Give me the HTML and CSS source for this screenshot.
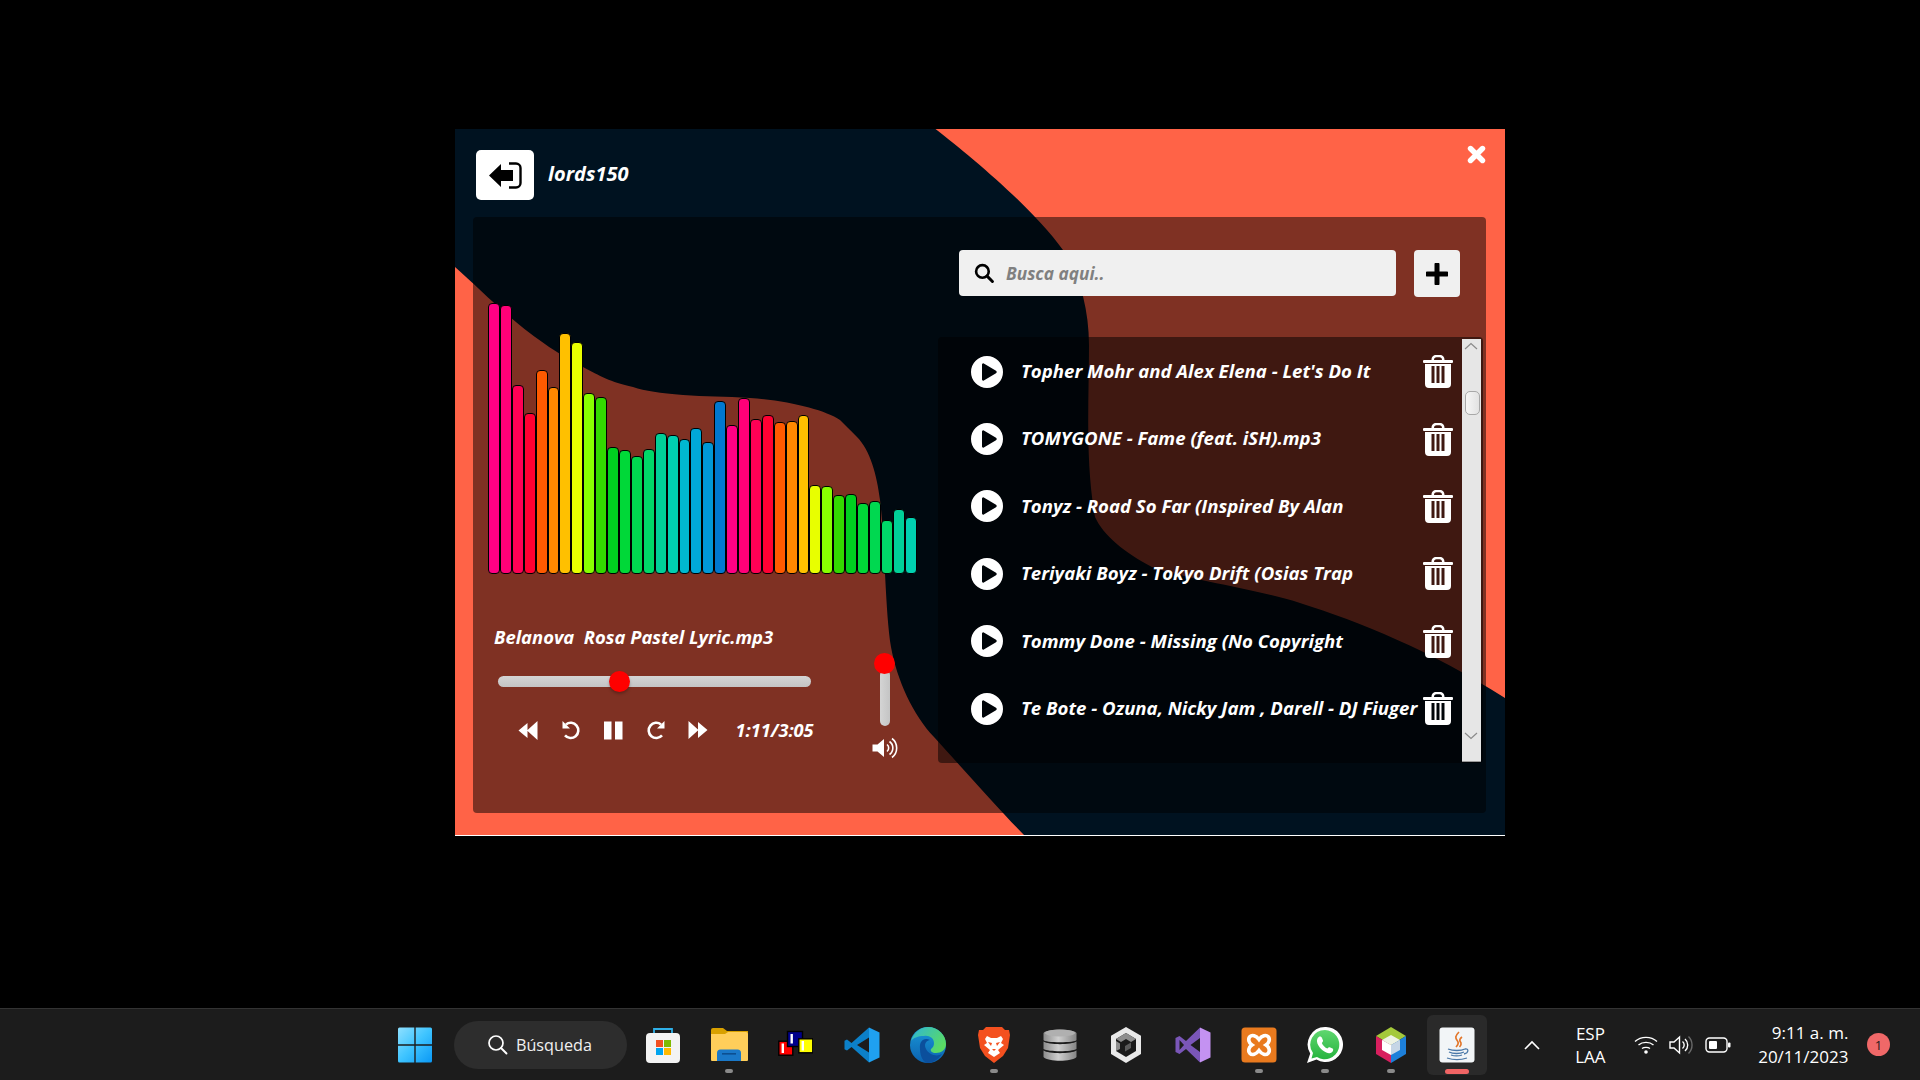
FILE: index.html
```html
<!DOCTYPE html>
<html lang="es">
<head>
<meta charset="utf-8">
<title>Reproductor</title>
<link rel="stylesheet" href="styles.css">
</head>
<body>
<div class="desktop">
  <main class="stage">
    <section class="window">
      <svg class="blob" viewBox="0 0 1050 707" aria-hidden="true">
        <path transform="translate(-455 -129)" fill="#001220" d="M455 129 L935.5 129 C970 156 1030 205 1063 250 C1080 275 1089 310 1089 345 C1089 400 1085 460 1095 517 C1103 535 1125 553 1152 567 C1190 580 1260 590 1300 603 C1360 622 1430 650 1505 698 L1505 836 L1025 836 C1002 813 964 770 934 737 C913 715 897 680 891 647 C885 610 885 540 880 500 C877 475 870 450 857 437 C850 430 845 425 840 420 C825 410 790 401 750 398 C725 396 705 397 683 395 C660 393 645 391 633 387 C610 382 600 376 583 367 C565 358 535 339 510 317 C490 300 470 280 455 267 Z"/>
      </svg>
      <header class="topbar">
        <button class="back-btn" type="button" aria-label="Salir">
          <svg width="33" height="27" viewBox="0 0 33 27"><path d="M0 13.5 L12 2 V8 H24 V19 H12 V25Z" fill="#000"/><path d="M20 1.5 H27 a4.5 4.5 0 0 1 4.5 4.5 V21 a4.5 4.5 0 0 1 -4.5 4.5 H20" fill="none" stroke="#000" stroke-width="2.4"/></svg>
        </button>
        <span class="username">lords150</span>
        <svg class="close" width="19" height="19" viewBox="0 0 19 19"><path d="M3.5 3.5 L15.5 15.5 M15.5 3.5 L3.5 15.5" stroke="#fff" stroke-width="5.4" stroke-linecap="round"/></svg>
      </header>
      <div class="panel">
        <div class="left">
          <div class="bars">
            <i class="bar b1" style="height:271px"></i><i class="bar b2" style="height:269px"></i><i class="bar b3" style="height:189px"></i><i class="bar b4" style="height:161px"></i><i class="bar b5" style="height:204px"></i><i class="bar b6" style="height:187px"></i><i class="bar b7" style="height:241px"></i><i class="bar b8" style="height:232px"></i><i class="bar b9" style="height:181px"></i><i class="bar b10" style="height:177px"></i><i class="bar b11" style="height:127px"></i><i class="bar b12" style="height:124px"></i><i class="bar b13" style="height:118px"></i><i class="bar b14" style="height:125px"></i><i class="bar b15" style="height:141px"></i><i class="bar b16" style="height:139px"></i><i class="bar b17" style="height:135px"></i><i class="bar b18" style="height:146px"></i><i class="bar b19" style="height:132px"></i><i class="bar b20" style="height:173px"></i><i class="bar b1" style="height:149px"></i><i class="bar b2" style="height:176px"></i><i class="bar b3" style="height:155px"></i><i class="bar b4" style="height:159px"></i><i class="bar b5" style="height:152px"></i><i class="bar b6" style="height:153px"></i><i class="bar b7" style="height:159px"></i><i class="bar b8" style="height:89px"></i><i class="bar b9" style="height:88px"></i><i class="bar b10" style="height:79px"></i><i class="bar b11" style="height:80px"></i><i class="bar b12" style="height:71px"></i><i class="bar b13" style="height:73px"></i><i class="bar b14" style="height:54px"></i><i class="bar b15" style="height:65px"></i><i class="bar b16" style="height:57px"></i>
          </div>
          <div class="player">
            <div class="player-main">
              <div class="now">Belanova  Rosa Pastel Lyric.mp3</div>
              <div class="seek"><span class="thumb seek-thumb"></span></div>
              <div class="controls">
                <span class="ctl"><svg width="20" height="20" viewBox="0 0 20 20"><path d="M0.5 10.5 L9.5 3 V18Z M9 10.5 L19.5 1 V20Z" fill="#fff"/></svg></span>
                <span class="ctl ctl-up"><svg width="20" height="20" viewBox="0 0 20 20"><path d="M5 4.4 A7.6 7.6 0 1 1 4 15.4" fill="none" stroke="#fff" stroke-width="2.6"/><path d="M1.5 1 V8.5 H9Z" fill="#fff"/></svg></span>
                <span class="ctl"><svg width="19" height="19" viewBox="0 0 19 19"><path d="M0 0.5 H7.5 V18.5 H0Z M11 0.5 H18.5 V18.5 H11Z" fill="#fff"/></svg></span>
                <span class="ctl"><svg width="20" height="20" viewBox="0 0 20 20"><path d="M15 4.4 A7.6 7.6 0 1 0 16 15.4" fill="none" stroke="#fff" stroke-width="2.6"/><path d="M18.5 1 V8.5 H11Z" fill="#fff"/></svg></span>
                <span class="ctl"><svg width="20" height="20" viewBox="0 0 20 20"><path d="M0.5 1 L10.5 10 L0.5 19Z M10 2 L19.5 10 L10 18Z" fill="#fff"/></svg></span>
                <span class="time">1:11/3:05</span>
              </div>
            </div>
            <div class="volume">
              <span class="thumb vol-thumb"></span>
              <span class="vol-track"></span>
              <svg class="vol-icon" width="26" height="22" viewBox="0 0 26 22"><path d="M0.5 7.5 H5.5 L12 2 V20 L5.5 14.5 H0.5Z" fill="#fff"/><path d="M15 7.5 a4.5 4.5 0 0 1 0 7 M17.5 4.5 a8 8 0 0 1 0 13 M20 1.5 a12 12 0 0 1 0 19" fill="none" stroke="#fff" stroke-width="1.6"/></svg>
            </div>
          </div>
        </div>
        <div class="right">
          <div class="search-row">
            <label class="search">
              <svg width="20" height="20" viewBox="0 0 19 19"><circle cx="8" cy="8" r="6" fill="none" stroke="#000" stroke-width="2.5"/><path d="M12.5 12.5 L17.5 17.5" stroke="#000" stroke-width="2.8" stroke-linecap="round"/></svg>
              <span class="placeholder">Busca aqui..</span>
            </label>
            <button class="add-btn" type="button" aria-label="Agregar">
              <svg width="22" height="22" viewBox="0 0 22 22"><path d="M11 1.5 V20.5 M1.5 11 H20.5" stroke="#000" stroke-width="5" stroke-linecap="round"/></svg>
            </button>
          </div>
          <div class="list">
            <ul class="rows">
              <li class="row"><svg class="play" width="32" height="32" viewBox="0 0 32 32"><use href="#play-icon"/></svg><span class="song">Topher Mohr and Alex Elena - Let's Do It</span><svg class="trash" width="30" height="33" viewBox="0 0 30 33"><use href="#trash-icon"/></svg></li>
              <li class="row"><svg class="play" width="32" height="32" viewBox="0 0 32 32"><use href="#play-icon"/></svg><span class="song">TOMYGONE - Fame (feat. iSH).mp3</span><svg class="trash" width="30" height="33" viewBox="0 0 30 33"><use href="#trash-icon"/></svg></li>
              <li class="row"><svg class="play" width="32" height="32" viewBox="0 0 32 32"><use href="#play-icon"/></svg><span class="song">Tonyz - Road So Far (Inspired By Alan</span><svg class="trash" width="30" height="33" viewBox="0 0 30 33"><use href="#trash-icon"/></svg></li>
              <li class="row"><svg class="play" width="32" height="32" viewBox="0 0 32 32"><use href="#play-icon"/></svg><span class="song">Teriyaki Boyz - Tokyo Drift (Osias Trap</span><svg class="trash" width="30" height="33" viewBox="0 0 30 33"><use href="#trash-icon"/></svg></li>
              <li class="row"><svg class="play" width="32" height="32" viewBox="0 0 32 32"><use href="#play-icon"/></svg><span class="song">Tommy Done - Missing (No Copyright</span><svg class="trash" width="30" height="33" viewBox="0 0 30 33"><use href="#trash-icon"/></svg></li>
              <li class="row"><svg class="play" width="32" height="32" viewBox="0 0 32 32"><use href="#play-icon"/></svg><span class="song">Te Bote - Ozuna, Nicky Jam , Darell - DJ Fiuger</span><svg class="trash" width="30" height="33" viewBox="0 0 30 33"><use href="#trash-icon"/></svg></li>
            </ul>
            <div class="scrollbar">
              <svg width="14" height="8" viewBox="0 0 14 8"><path d="M1 7 L7 1.5 L13 7" fill="none" stroke="#8a8a8a" stroke-width="1.2"/></svg>
              <span class="sb-thumb"></span>
              <svg class="sb-down" width="14" height="8" viewBox="0 0 14 8"><path d="M1 1 L7 6.5 L13 1" fill="none" stroke="#8a8a8a" stroke-width="1.2"/></svg>
            </div>
          </div>
        </div>
      </div>
    </section>
  </main>

  <footer class="taskbar">
    <span class="slot win">
      <svg width="36" height="36" viewBox="0 0 36 36"><defs><linearGradient id="gw" x1="0" y1="0" x2="1" y2="1"><stop offset="0" stop-color="#8fe0ff"/><stop offset=".5" stop-color="#3ec4ff"/><stop offset="1" stop-color="#0a98f5"/></linearGradient></defs><path fill="url(#gw)" d="M1 2 a1.5 1.5 0 0 1 1.5 -1.5 H17.3 V17.3 H1Z M18.7 .5 H33.5 a1.5 1.5 0 0 1 1.5 1.5 V17.3 H18.7Z M1 18.7 H17.3 V35.5 H2.5 a1.5 1.5 0 0 1 -1.5 -1.5Z M18.7 18.7 H35 V34 a1.5 1.5 0 0 1 -1.5 1.5 H18.7Z"/></svg>
    </span>
    <span class="pill">
      <svg width="21" height="21" viewBox="0 0 21 21"><circle cx="9" cy="9" r="7" fill="none" stroke="#fff" stroke-width="1.7"/><path d="M14 14 L19.5 19.5" stroke="#fff" stroke-width="1.9" stroke-linecap="round"/></svg>
      <span>Búsqueda</span>
    </span>
    <div class="apps">
      <span class="slot">
        <svg width="36" height="36" viewBox="0 0 36 36"><path d="M9 9 V2 H27 V9" fill="none" stroke="#2fb0e8" stroke-width="1.8"/><rect x="1" y="6" width="34" height="30" rx="4" fill="#f3f3f3"/><rect x="11" y="13" width="7" height="7" fill="#f25022"/><rect x="19" y="13" width="7" height="7" fill="#7fba00"/><rect x="11" y="21" width="7" height="7" fill="#00a4ef"/><rect x="19" y="21" width="7" height="7" fill="#ffb900"/></svg>
      </span>
      <span class="slot">
        <svg width="37" height="36" viewBox="0 0 37 36"><path d="M0 3 a2 2 0 0 1 2 -2 H12 L16 4 H37 V10 H0Z" fill="#d8a000"/><path d="M0 7 H14 L17 5 H35 a2 2 0 0 1 2 2 V33 a1 1 0 0 1 -1 1 H1 a1 1 0 0 1 -1 -1Z" fill="#ffce5a"/><path d="M6 34 V26 a3.5 3.5 0 0 1 3.5 -3.5 H26.5 a3.5 3.5 0 0 1 3.5 3.5 V34Z" fill="#1a78c8"/><rect x="11" y="26" width="14" height="1.6" fill="#0c4f90"/></svg>
        <i class="dot"></i>
      </span>
      <span class="slot">
        <svg width="36" height="36" viewBox="0 0 36 36"><rect x="1.8" y="14.2" width="14" height="14" fill="#f00" stroke="#000" stroke-width="1.4"/><rect x="4.6" y="16.5" width="2.4" height="9.5" fill="#fff"/><rect x="10.5" y="4.5" width="15" height="15" fill="#00008b" stroke="#000" stroke-width="1.4"/><rect x="13.5" y="7" width="2.4" height="9.5" fill="#fff"/><rect x="21.8" y="11.8" width="14" height="14" fill="#ff0" stroke="#000" stroke-width="1.4"/><rect x="24.6" y="14" width="2.4" height="9.5" fill="#fff"/></svg>
      </span>
      <span class="slot">
        <svg width="36" height="36" viewBox="0 0 36 36"><path d="M25 .5 L7.5 16 L3 12.5 L.5 13.8 V22.2 L3 23.5 L7.5 20 L25 35.5 V25.5 L13 18 L25 10.5Z" fill="#0c80c8"/><path d="M25 .5 L35.5 5.5 V30.5 L25 35.5Z" fill="#1fa0f0"/></svg>
      </span>
      <span class="slot">
        <svg width="36" height="36" viewBox="0 0 36 36"><defs><linearGradient id="ge1" x1="0" y1="0" x2="0" y2="1"><stop offset="0" stop-color="#1a98d8"/><stop offset="1" stop-color="#0b62b0"/></linearGradient><linearGradient id="ge2" x1="0" y1="0" x2="1" y2=".6"><stop offset="0" stop-color="#2fb5d5"/><stop offset="1" stop-color="#5bdc62"/></linearGradient></defs><circle cx="18" cy="18" r="18" fill="url(#ge1)"/><path d="M1 14 C4 5 11 0 18 0 C28 0 36 8 36 17 C36 23 31 26 26 26 C22 26 20 24 21 22 C23 20 24 19 24 16 C24 11 19 8 14 9 C8 9 3 11 1 14Z" fill="url(#ge2)"/><path d="M10 22 C9 14 14 10 20 13 C15 14 14 18 16 22 C19 28 27 30 32 27 C28 33 22 36 18 36 C14 36 10 30 10 22Z" fill="#0b4f9c"/></svg>
      </span>
      <span class="slot">
        <svg width="32" height="36" viewBox="0 0 32 36"><path d="M8 0 H24 L27 3 L31 3 L32 8 L30 21 L25 29 L16 36 L7 29 L2 21 L0 8 L1 3 L5 3Z" fill="#f4501f"/><path d="M9 9 L13 11 H19 L23 9 L25 12 L23 16 L26 18 L20 23 L22 26 L16 30 L10 26 L12 23 L6 18 L9 16 L7 12Z" fill="#fff"/><path d="M10 15 L14 16 L13 19Z M22 15 L18 16 L19 19Z M14 22 H18 L16 24Z" fill="#f4501f"/></svg>
        <i class="dot"></i>
      </span>
      <span class="slot">
        <svg width="34" height="34" viewBox="0 0 34 34"><defs><linearGradient id="gd" x1="0" y1="0" x2="1" y2="0"><stop offset="0" stop-color="#8c8c8c"/><stop offset=".45" stop-color="#cfcfcf"/><stop offset="1" stop-color="#858585"/></linearGradient></defs><path d="M.5 5.5 C.5 .5 33.5 .5 33.5 5.5 V12 C33.5 15 .5 15 .5 12Z" fill="url(#gd)"/><path d="M.5 13.5 C5 17 29 17 33.5 13.5 V21 C29 24 5 24 .5 21Z" fill="url(#gd)"/><path d="M.5 22.5 C5 26 29 26 33.5 22.5 V29 C29 34 5 34 .5 29Z" fill="url(#gd)"/><ellipse cx="17" cy="5" rx="15" ry="3.5" fill="#b0b0b0"/></svg>
      </span>
      <span class="slot">
        <svg width="32" height="36" viewBox="0 0 32 36"><path d="M16 0 L31 8.8 V27 L16 36 L1 27 V8.8Z" fill="#e9e9e9"/><path d="M16 6 L26 12 V24 L16 30 L6 24 V12Z" fill="#1a1a1a"/><path d="M16 6 L26 12 L21 15 L16 12 L11 15 L6 12Z M6 14 L10 16.5 V22 L6 24Z" fill="#8d8d8d"/><path d="M15 19 L21 15.5 V21 L15 24.5Z" fill="#5a5a5a"/></svg>
      </span>
      <span class="slot">
        <svg width="36" height="36" viewBox="0 0 36 36"><path d="M25 .5 L11 14 L4.5 9 L.5 11 V25 L4.5 27 L11 22 L25 35.5 V25 L15.5 18 L25 11Z" fill="#7a56b8"/><path d="M4.5 13 L9 18 L4.5 23Z" fill="#1c1c1c"/><path d="M25 .5 L35.5 5.5 V30.5 L25 35.5Z" fill="#c492f2"/></svg>
      </span>
      <span class="slot">
        <svg width="36" height="36" viewBox="0 0 36 36"><rect x=".5" y=".5" width="35" height="35" rx="3.5" fill="#e97a1e"/><path d="M18 12.5 C15 8.5 11 7.5 9 9.5 C6.5 12 8 16 11 18 C8 20 6.5 24 9 26.5 C11 28.5 15 27.5 18 23.5 C21 27.5 25 28.5 27 26.5 C29.5 24 28 20 25 18 C28 16 29.5 12 27 9.5 C25 7.5 21 8.5 18 12.5Z" fill="none" stroke="#fff" stroke-width="3.6"/></svg>
        <i class="dot"></i>
      </span>
      <span class="slot">
        <svg width="36" height="36" viewBox="0 0 36 36"><defs><linearGradient id="gwa" x1="0" y1="0" x2="0" y2="1"><stop offset="0" stop-color="#5fd76f"/><stop offset="1" stop-color="#27b43f"/></linearGradient></defs><path d="M18 0 A17.5 17.5 0 1 1 9.5 32.5 L0 36 L3.2 26.5 A17.5 17.5 0 0 1 18 0Z" fill="#fff"/><path d="M18 3 A14.6 14.6 0 1 1 10 30 L4.5 31.5 L6 26 A14.6 14.6 0 0 1 18 3Z" fill="url(#gwa)"/><path d="M13 9.5 C14 9.5 14.5 10 15 11 L16 13.5 C16.2 14.2 15.8 14.8 14.8 16 C15.8 18.5 18 20.6 20.4 21.6 C21.5 20.4 22 20 22.8 20.3 L25.5 21.6 C26.3 22 26.3 22.6 26 23.8 C25.5 25.4 23.5 26.4 22 26.2 C16.5 25.5 10.5 19.5 10 14.5 C9.8 12 11.3 9.5 13 9.5Z" fill="#fff"/></svg>
        <i class="dot"></i>
      </span>
      <span class="slot">
        <svg width="32" height="36" viewBox="0 0 32 36"><path d="M16 0 L31 9 L16 18 L1 9Z" fill="#a4c93a"/><path d="M1 9 L16 18 V36 L1 27Z" fill="#d81f5e"/><path d="M31 9 L16 18 V36 L31 27Z" fill="#1d80da"/><path d="M16 8 L25 13 L16 18 L7 13Z" fill="#eef3e4"/><path d="M7 13 L16 18 V28 L7 23Z" fill="#fff"/><path d="M25 13 L16 18 V28 L25 23Z" fill="#c6d6e6"/></svg>
        <i class="dot"></i>
      </span>
      <span class="slot active">
        <svg width="36" height="36" viewBox="0 0 36 36"><rect x=".5" y=".5" width="35" height="35" rx="3" fill="#f2f5f7"/><path d="M20 5 C16 9 16 11 18.5 14 C20 16 19 18 17 20 M23 10 C20 12 20.5 14 22 16 C22.5 17.5 21.5 19 20.5 20" fill="none" stroke="#e2762a" stroke-width="1.7"/><path d="M9 22 C14 24 22 24 26 22 M10 25 C14 27 21 27 25 25 M12 28 C15 29 20 29 23 28 M8 31 C14 33 22 33 28 31 M26 22 C30 21 30 26 25 27" fill="none" stroke="#4a78a8" stroke-width="1.3"/></svg>
        <i class="dot dot-red"></i>
      </span>
    </div>
    <svg class="chevron" width="20" height="12" viewBox="0 0 20 12"><path d="M3 10 L10 3 L17 10" fill="none" stroke="#fff" stroke-width="1.6"/></svg>
    <div class="lang"><span>ESP</span><span>LAA</span></div>
    <svg class="t-wifi" width="24" height="20" viewBox="0 0 24 20"><path d="M1 6.5 C7 1 17 1 23 6.5 M4.5 10 C8.5 6.5 15.5 6.5 19.5 10 M8 13.5 C10 12 14 12 16 13.5" fill="none" stroke="#fff" stroke-width="1.4"/><circle cx="12" cy="17" r="1.8" fill="#fff"/></svg>
    <svg class="t-vol" width="24" height="20" viewBox="0 0 24 20"><path d="M1 7 H5 L10.5 2 V18 L5 13 H1Z" fill="none" stroke="#fff" stroke-width="1.4"/><path d="M13.5 6.5 a4.5 4.5 0 0 1 0 7 M16 4 a8 8 0 0 1 0 12" fill="none" stroke="#fff" stroke-width="1.4"/><path d="M19.5 1.5 a12 12 0 0 1 0 17" fill="none" stroke="#6a6a6a" stroke-width="1.4"/></svg>
    <svg class="t-bat" width="26" height="16" viewBox="0 0 26 16"><rect x="1" y="1" width="21" height="14" rx="3.5" fill="none" stroke="#fff" stroke-width="1.4"/><rect x="4" y="4" width="8" height="8" rx="1" fill="#fff"/><rect x="23" y="5.5" width="2.5" height="5" rx="1" fill="#fff"/></svg>
    <div class="clock"><span>9:11 a. m.</span><span>20/11/2023</span></div>
    <span class="notify">1</span>
  </footer>
</div>

<svg class="defs" width="0" height="0" aria-hidden="true">
  <symbol id="play-icon" viewBox="0 0 32 32"><path fill-rule="evenodd" fill="#fff" d="M16 0 A16 16 0 1 1 16 32 A16 16 0 1 1 16 0Z M11 8.5 V23.5 A1.2 1.2 0 0 0 12.8 24.5 L25 17.2 A1.4 1.4 0 0 0 25 14.8 L12.8 7.5 A1.2 1.2 0 0 0 11 8.5Z"/></symbol>
  <symbol id="trash-icon" viewBox="0 0 30 33"><path fill="#fff" fill-rule="evenodd" d="M8.5 5 C8.5 1.5 10.5 0 13 0 H17 C19.5 0 21.5 1.5 21.5 5 H29 a1 1 0 0 1 1 1 V7 a1 1 0 0 1 -1 1 H1 a1 1 0 0 1 -1 -1 V6 a1 1 0 0 1 1 -1Z M11 5 H19 C19 3.2 18 2.2 16.5 2.2 H13.5 C12 2.2 11 3.2 11 5Z"/><path fill="#fff" fill-rule="evenodd" d="M2 9 H28 V29 a4 4 0 0 1 -4 4 H6 a4 4 0 0 1 -4 -4Z M8.5 11 V28 H11.5 V11Z M13.5 11 V28 H16.5 V11Z M18.5 11 V28 H21.5 V11Z"/></symbol>
</svg>
</body>
</html>
```
FILE: styles.css
```css
* { box-sizing: border-box; }
html, body { margin: 0; height: 100%; }
body { background: #000; font-family: "Open Sans", "Noto Sans", sans-serif; overflow: hidden; }
.desktop { width: 1920px; height: 1080px; display: flex; flex-direction: column; }
.defs { position: absolute; }

.stage { flex: 1; padding: 129px 0 0 455px; }
.window { position: relative; width: 1050px; height: 707px; background: #ff6347; border-bottom: 1px solid #fff; overflow: hidden; color: #fff; font-style: italic; font-weight: 700; }
.blob { position: absolute; left: 0; top: 0; width: 1050px; height: 707px; }

.topbar { position: relative; height: 88px; padding: 21px 19px 0 21px; display: flex; align-items: flex-start; }
.back-btn { width: 58px; height: 50px; border: 0; border-radius: 5px; background: #fff; padding: 0; display: flex; align-items: center; justify-content: center; }
.username { margin: 10px 0 0 14px; font-size: 20px; line-height: 28px; }
.close { margin: -5px 0 0 auto; }

.panel { position: relative; margin: 0 19px 0 18px; height: 596px; background: rgba(0,0,0,.5); border-radius: 4px; display: flex; }
.left { width: 465px; padding: 86px 0 0 15px; }
.bars { display: flex; align-items: flex-end; height: 271px; }
.bar { display: block; width: 11.92px; border: 1px solid #000; border-radius: 4px; }
.b1 { background: #ff0084; } .b2 { background: #ff0078; } .b3 { background: #ff0055; } .b4 { background: #ff0033; }
.b5 { background: #ff5a00; } .b6 { background: #ff8800; } .b7 { background: #ffc000; } .b8 { background: #e8ff00; }
.b9 { background: #88ff00; } .b10 { background: #33d900; } .b11 { background: #00d020; } .b12 { background: #00d838; }
.b13 { background: #00d850; } .b14 { background: #00d868; } .b15 { background: #00d098; } .b16 { background: #00d0b0; }
.b17 { background: #00b8d0; } .b18 { background: #00a8d8; } .b19 { background: #0098d8; } .b20 { background: #0078d0; }

.player { display: flex; margin-top: 51px; }
.player-main { width: 386px; }
.now { margin-left: 6px; font-size: 18.4px; line-height: 24px; white-space: pre; }
.seek { position: relative; margin: 27px 0 0 10px; width: 313px; height: 11px; border-radius: 6px; background: linear-gradient(#d4d4d4, #c4c4c4); }
.thumb { display: block; flex: none; width: 21px; height: 21px; border-radius: 50%; background: #f00; }
.seek-thumb { position: absolute; left: 111px; top: -5px; box-shadow: 0 2px 3px rgba(0,0,0,.25); }
.controls { display: flex; align-items: center; margin: 33px 0 0 19px; height: 20px; }
.ctl { width: 42.5px; display: flex; justify-content: center; }
.ctl-up { padding-bottom: 0; }
.time { margin-left: 16px; font-size: 18.2px; line-height: 20px; white-space: nowrap; }

.volume { width: 21px; margin-top: 27.5px; display: flex; flex-direction: column; align-items: center; }
.vol-thumb { position: relative; z-index: 1; }
.vol-track { display: block; width: 10px; height: 56px; margin-top: -4px; border-radius: 5px; background: linear-gradient(90deg, #d4d4d4, #c4c4c4); }
.vol-icon { flex: none; margin-top: 11px; }

.right { flex: 1; padding-top: 33px; }
.search-row { display: flex; margin-left: 21px; }
.search { width: 437px; height: 46px; background: #f0f0f0; border-radius: 4px; display: flex; align-items: center; padding-left: 15px; gap: 12px; }
.placeholder { color: #808080; font-size: 17.3px; }
.add-btn { width: 46px; height: 47px; margin-left: 18px; border: 0; padding: 0; background: #f0f0f0; border-radius: 4px; display: flex; align-items: center; justify-content: center; }

.list { margin-top: 40px; width: 545px; height: 426px; background: rgba(0,0,0,.5); border-radius: 4px; display: flex; }
.rows { list-style: none; margin: 0; padding: 1px 0 0 0; width: 523.5px; }
.row { height: 67.4px; display: flex; align-items: center; padding: 0 8.5px 0 33px; }
.play { flex: none; }
.song { margin: -2.5px 0 0 18px; font-size: 18.6px; white-space: nowrap; }
.trash { flex: none; margin-left: auto; }

.scrollbar { width: 19px; margin: 2px 2px 1px 0; background: #e6e6e6; border-bottom: 1px solid #999; display: flex; flex-direction: column; align-items: center; padding: 3px 0 0; }
.sb-thumb { width: 15px; height: 24px; margin: 41px 0 0 3px; border-radius: 5px; border: 1px solid #a8a8a8; background: linear-gradient(90deg, #f6f6f6, #e2e2e2); }
.sb-down { margin: auto 0 21px; }

.taskbar { height: 72px; background: #1c1c1c; border-top: 1px solid #333; display: flex; align-items: center; padding-left: 381.6px; color: #fff; font-size: 16px; }
.slot { position: relative; flex: none; width: 66.2px; height: 60px; display: flex; align-items: center; justify-content: center; }
.pill { flex: none; margin-left: 6.2px; width: 173px; height: 48px; border-radius: 24px; background: #2d2d2d; display: flex; align-items: center; padding-left: 33px; gap: 8px; font-size: 16.2px; color: #f0f0f0; }
.apps { display: flex; margin-left: 3px; }
.dot { position: absolute; left: 50%; bottom: 1.5px; width: 8px; height: 4.5px; margin-left: -4px; border-radius: 3px; background: #8a8a8a; }
.active::before { content: ""; position: absolute; left: 3px; right: 3px; top: 0; bottom: 0; border-radius: 6px; background: #2a2a2a; }
.active svg { position: relative; }
.dot-red { width: 24px; margin-left: -12px; height: 5px; background: #f06464; bottom: 1px; }

.chevron { flex: none; margin-left: 32px; }
.lang { flex: none; width: 40px; margin-left: 28px; display: flex; flex-direction: column; align-items: center; line-height: 23px; font-size: 17px; }
.t-wifi { flex: none; margin-left: 24px; }
.t-vol { flex: none; margin-left: 11px; }
.t-bat { flex: none; margin-left: 12px; }
.clock { flex: none; width: 117px; display: flex; flex-direction: column; align-items: flex-end; line-height: 24px; font-size: 17px; }
.notify { flex: none; margin-left: 18.5px; width: 23px; height: 23px; border-radius: 50%; background: #f06868; color: #1c1c1c; display: flex; align-items: center; justify-content: center; font-size: 13px; }
```
